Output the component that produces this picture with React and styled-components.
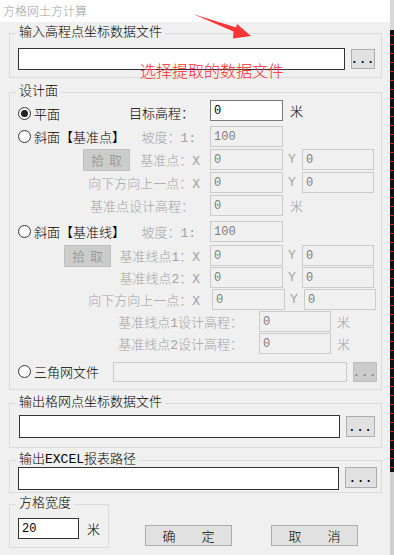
import React from "react";
import styled, { createGlobalStyle } from "styled-components";

const GlobalStyle = createGlobalStyle`
  html, body {
    margin: 0;
    padding: 0;
    background: #ffffff;
  }
  body {
    font-family: "Liberation Mono", "Noto Sans CJK SC", monospace;
    font-size: 13px;
    font-weight: 300;
  }
  * {
    box-sizing: border-box;
  }
`;

const Screen = styled.div`
  display: flex;
  width: 394px;
  height: 555px;
  overflow: hidden;
`;

const Window = styled.div`
  position: relative;
  width: 390px;
  display: flex;
  flex-direction: column;
  background: #f0f0f0;
`;

const TitleBar = styled.div`
  height: 22px;
  padding-left: 3px;
  background: #ffffff;
  color: #a0a0a0;
  font-family: "Noto Sans CJK SC", sans-serif;
  font-size: 12px;
  line-height: 22px;
`;

const Body = styled.div`
  flex: 1;
  display: flex;
  flex-direction: column;
  padding: 11px 0 0 9px;
`;

const Group = styled.div`
  width: ${(p) => p.$w || 373}px;
  margin-top: ${(p) => p.$mt || 0}px;
  padding: 0 7px ${(p) => p.$pb || 0}px 8px;
  border: 1px solid #dcdcdc;
`;

const Legend = styled.div`
  width: fit-content;
  margin: -8px 0 ${(p) => p.$mb || 0}px -2px;
  padding: 0 3px;
  background: #f0f0f0;
  color: #000;
  line-height: 14px;
  white-space: nowrap;
`;

const FileRow = styled.div`
  display: flex;
  align-items: ${(p) => (p.$top ? "flex-start" : "center")};
  gap: 6px;
  margin-left: ${(p) => p.$ml || 0}px;
`;

const Field = styled.div`
  flex: none;
  width: ${(p) => p.$w}px;
  height: ${(p) => p.$h || 21}px;
  padding-left: 3px;
  display: flex;
  align-items: center;
  background: ${(p) => (p.$off ? "#f0f0f0" : "#ffffff")};
  border: 1px solid ${(p) => (p.$off ? "#cccccc" : p.$dark ? "#333333" : "#7a7a7a")};
  color: ${(p) => (p.$off ? "#7d7d7d" : "#000")};
  font-size: 12px;
  margin-left: ${(p) => p.$ml || 0}px;
`;

const DotsButton = styled.div`
  flex: none;
  width: ${(p) => p.$w || 24}px;
  height: ${(p) => p.$h || 20}px;
  display: flex;
  align-items: center;
  justify-content: center;
  padding-top: 2px;
  background: ${(p) => (p.$off ? "#cccccc" : "#e1e1e1")};
  border: 1px solid ${(p) => (p.$off ? "#bfbfbf" : "#adadad")};
  color: ${(p) => (p.$off ? "#8a8a8a" : "#000")};
  font-weight: bold;
  letter-spacing: 1px;
  font-size: 12px;
`;

const Rows = styled.div`
  display: flex;
  flex-direction: column;
`;

const Row = styled.div`
  display: flex;
  align-items: center;
  height: 21px;
  margin-top: ${(p) => p.$mt || 0}px;
`;

const Lead = styled.div`
  flex: none;
  width: ${(p) => p.$w || 182}px;
  margin-right: 10px;
  display: flex;
  align-items: center;
  height: 100%;
`;

const Option = styled.div`
  display: flex;
  align-items: center;
  gap: 3px;
  color: #000;
  white-space: nowrap;
  margin-top: ${(p) => p.$dy || 0}px;
`;

const Radio = styled.span`
  flex: none;
  width: 13px;
  height: 13px;
  border-radius: 50%;
  border: 1px solid #333;
  background: #fff;
  display: inline-flex;
  align-items: center;
  justify-content: center;
`;

const RadioDot = styled.span`
  width: 7px;
  height: 7px;
  border-radius: 50%;
  background: #222;
`;

const Label = styled.span`
  margin-left: auto;
  padding-right: ${(p) => p.$pad || 0}px;
  color: ${(p) => (p.$dim ? "#a3a3a3" : "#000")};
  white-space: nowrap;
  margin-top: ${(p) => p.$dy || 0}px;
`;

const PickButton = styled.div`
  flex: none;
  width: 47px;
  height: 22px;
  margin-left: ${(p) => p.$ml || 0}px;
  display: flex;
  align-items: center;
  justify-content: center;
  background: #cccccc;
  border: 1px solid #bfbfbf;
  color: #8a8a8a;
  word-spacing: -3px;
`;

const YLabel = styled.span`
  flex: none;
  width: 19px;
  padding-left: 5px;
  color: #a3a3a3;
`;

const Unit = styled.span`
  margin-left: ${(p) => p.$ml || 7}px;
  color: ${(p) => (p.$dim ? "#a3a3a3" : "#000")};
`;

const Footer = styled.div`
  display: flex;
  align-items: flex-end;
  margin-top: 11px;
`;

const Actions = styled.div`
  display: flex;
  gap: 39px;
  margin: 0 0 2px 36px;
`;

const ActionButton = styled.div`
  width: 87px;
  height: 21px;
  display: flex;
  align-items: center;
  justify-content: center;
  background: #e1e1e1;
  border: 1px solid #adadad;
  color: #000;
  white-space: pre;
  font-family: "Noto Sans CJK SC", sans-serif;
`;

const Note = styled.div`
  position: absolute;
  left: 140px;
  top: 61px;
  color: #ff2b2b;
  font-family: "Noto Sans CJK SC", sans-serif;
  font-size: 16px;
  line-height: 18px;
  white-space: nowrap;
`;

const ArrowLayer = styled.svg`
  position: absolute;
  left: 0;
  top: 0;
  pointer-events: none;
`;

const Strip = styled.div`
  flex: none;
  width: 4px;
  display: flex;
  flex-direction: column;
`;

const StripPart = styled.div`
  height: ${(p) => p.$h}px;
  flex: ${(p) => (p.$h ? "none" : "1")};
  background: ${(p) => p.$bg};
`;

function Slope({ title, pick, points, heights }) {
  return (
    <>
      <Row $mt={5}>
        <Lead>
          <Option>
            <Radio />
            {title}
          </Option>
          <Label $dim $pad={4}>坡度：1:</Label>
        </Lead>
        <Field $w={73} $off>100</Field>
      </Row>
      {points.map((p, i) => (
        <Row key={p.label} $mt={p.mt}>
          <Lead>
            {i === 0 && <PickButton $ml={pick}>拾 取</PickButton>}
            <Label $dim>{p.label}</Label>
          </Lead>
          <Field $w={73} $off $ml={p.shift}>0</Field>
          <YLabel>Y</YLabel>
          <Field $w={72} $off>0</Field>
        </Row>
      ))}
      {heights.map((h) => (
        <Row key={h.label} $mt={h.mt}>
          <Lead $w={h.w}>
            <Label $dim $pad={6}>{h.label}</Label>
          </Lead>
          <Field $w={h.fw} $off>0</Field>
          <Unit $dim $ml={h.uml}>米</Unit>
        </Row>
      ))}
    </>
  );
}

export default function App() {
  return (
    <Screen>
      <GlobalStyle />
      <Window>
        <TitleBar>方格网土方计算</TitleBar>
        <Body>
          <Group $pb={7}>
            <Legend $mb={8}>输入高程点坐标数据文件</Legend>
            <FileRow>
              <Field $w={327} $h={22} $dark />
              <DotsButton>...</DotsButton>
            </FileRow>
          </Group>

          <Group $mt={14} $pb={7}>
            <Legend $mb={1}>设计面</Legend>
            <Rows>
              <Row>
                <Lead>
                  <Option $dy={5}>
                    <Radio>
                      <RadioDot />
                    </Radio>
                    平面
                  </Option>
                  <Label $pad={6} $dy={3}>目标高程：</Label>
                </Lead>
                <Field $w={73}>0</Field>
                <Unit>米</Unit>
              </Row>
              <Slope
                title="斜面【基准点】"
                pick={65}
                points={[
                  { label: "基准点：X", mt: 2 },
                  { label: "向下方向上一点：X", mt: 2 },
                ]}
                heights={[{ label: "基准点设计高程：", mt: 2, w: 182, fw: 73, uml: 7 }]}
              />
              <Slope
                title="斜面【基准线】"
                pick={46}
                points={[
                  { label: "基准线点1：X", mt: 3 },
                  { label: "基准线点2：X", mt: 1 },
                  { label: "向下方向上一点：X", mt: 1, shift: 2 },
                ]}
                heights={[
                  { label: "基准线点1设计高程：", mt: 1, w: 231, fw: 72, uml: 6 },
                  { label: "基准线点2设计高程：", mt: 1, w: 231, fw: 72, uml: 6 },
                ]}
              />
              <Row $mt={7}>
                <Option>
                  <Radio />
                  三角网文件
                </Option>
                <FileRow $ml={14}>
                  <Field $w={234} $h={20} $off />
                  <DotsButton $off>...</DotsButton>
                </FileRow>
              </Row>
            </Rows>
          </Group>

          <Group $mt={13} $pb={9}>
            <Legend $mb={5}>输出格网点坐标数据文件</Legend>
            <FileRow $ml={1}>
              <Field $w={321} $h={23} $dark />
              <DotsButton $w={29} $h={21}>...</DotsButton>
            </FileRow>
          </Group>

          <Group $mt={12} $pb={2}>
            <Legend>输出EXCEL报表路径</Legend>
            <FileRow $top>
              <Field $w={321} $h={23} $dark />
              <DotsButton $w={32} $h={21}>...</DotsButton>
            </FileRow>
          </Group>

          <Footer>
            <Group $w={100} $pb={8}>
              <Legend $mb={7}>方格宽度</Legend>
              <FileRow>
                <Field $w={61} $dark>20</Field>
                <Unit $ml={2}>米</Unit>
              </FileRow>
            </Group>
            <Actions>
              <ActionButton>确　　定</ActionButton>
              <ActionButton>取　　消</ActionButton>
            </Actions>
          </Footer>
        </Body>

        <Note>选择提取的数据文件</Note>
        <ArrowLayer width="390" height="60" viewBox="0 0 390 60">
          <polygon
            points="193,14 236,27.5 237,24 251,36 233,38.5 233.5,31.5"
            fill="#ff3434"
          />
        </ArrowLayer>
      </Window>
      <Strip>
        <StripPart $h={30} $bg="#d8d8d8" />
        <StripPart
          $h={442}
          $bg="repeating-linear-gradient(180deg, #111 0 5px, #d22 5px 6px, #111 6px 9px)"
        />
        <StripPart $bg="#cfcfcf" />
      </Strip>
    </Screen>
  );
}
